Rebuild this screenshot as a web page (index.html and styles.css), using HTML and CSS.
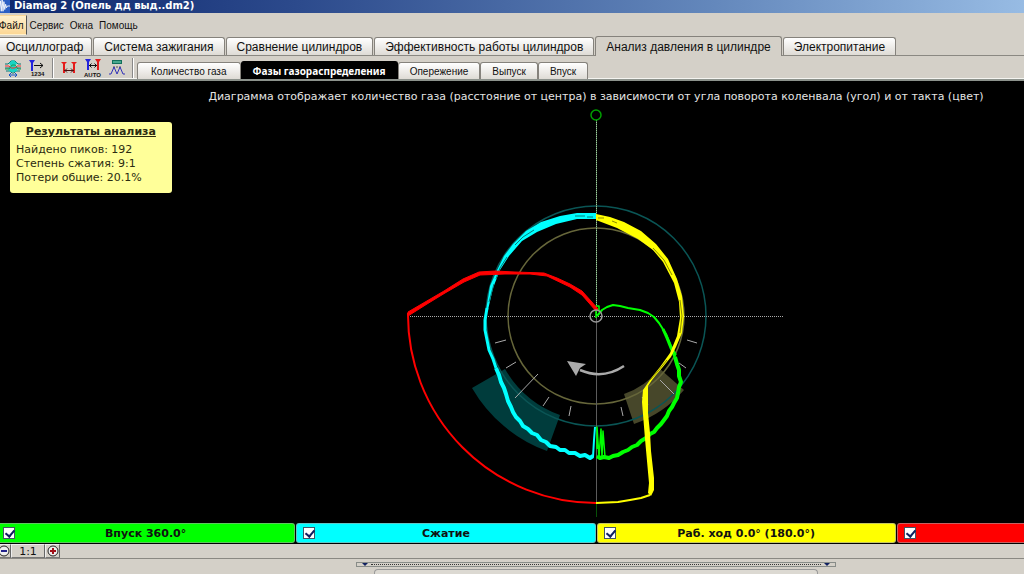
FILE: index.html
```html
<!DOCTYPE html>
<html lang="ru">
<head>
<meta charset="utf-8">
<title>Diamag 2</title>
<link rel="stylesheet" href="styles.css">
</head>
<body>
<div class="app">
  <header class="titlebar">
    <svg class="logo" viewBox="0 0 16 16" aria-hidden="true"><rect width="16" height="16" fill="#2b5fc4"/><path d="M0 8h2l1-3 1 7 1-10 1 12 1-14 1 14 1-11 1 9 1-6 1 4 1-2h3" fill="none" stroke="#fff"/></svg>
    <span>Diamag 2 (Опель дд выд..dm2)</span>
  </header>
  <nav class="menu">
    <button class="menu-item menu-open">Файл</button>
    <button class="menu-item">Сервис</button>
    <button class="menu-item">Окна</button>
    <button class="menu-item">Помощь</button>
  </nav>
  <div class="tabs" role="tablist">
    <button class="tab tab-first" role="tab">Осциллограф</button>
    <button class="tab" role="tab">Система зажигания</button>
    <button class="tab" role="tab">Сравнение цилиндров</button>
    <button class="tab" role="tab">Эффективность работы цилиндров</button>
    <button class="tab tab-active" role="tab" aria-selected="true">Анализ давления в цилиндре</button>
    <button class="tab" role="tab">Электропитание</button>
  </div>
  <div class="toolbar">
    <div class="tools">
      <button class="tool" aria-label="Масштаб сигнала"><svg viewBox="0 0 18 18"><path d="M1 5h3l3-3h4l3 3h3M1 9h16M2 12h4l2 2h2l2-2h4" fill="none" stroke="#087878"/><path d="M5 4l4-3 4 3-2 4 3 3-3 2H7l-3-2 3-3z" fill="#18d4c4"/><path d="M1 7h4l2 2h4l2-2h4" fill="none" stroke="#e33"/><path d="M1 10h4l3-4h3l3 4h3" fill="none" stroke="#1c9b54"/><path d="M5 16h8M7 14l-2 2 2 2M11 14l2 2-2 2" fill="none" stroke="#1556c8"/></svg></button>
      <button class="tool" aria-label="Нумерация"><svg viewBox="0 0 18 18"><path d="M1 1h6L5 4v8H3V4z" fill="#2222dd"/><path d="M6 6.500h9M12 4l3 2.500-3 2.500" fill="none" stroke="#111"/><text class="tool-text" x="3" y="17">1234</text></svg></button>
      <span class="divider"></span>
      <button class="tool" aria-label="Маркеры"><svg viewBox="0 0 18 18"><path d="M1 3h6L5 5v9H3V5zM11 3h6l-2 2v9h-2V5z" fill="#e51b1b"/><path d="M4 11.500h10M7 9.500l-2 2 2 2M11 9.500l2 2-2 2" fill="none" stroke="#4a1010"/></svg></button>
      <button class="tool" aria-label="Автоматические маркеры"><svg viewBox="0 0 18 18"><path d="M1 0h6L5 3v8H3V3z" fill="#2222dd"/><path d="M11 0h6l-2 3v8h-2V3z" fill="#e51b1b"/><path d="M5 6.500h8M7.500 4.500l-2 2 2 2M10.500 4.500l2 2-2 2" fill="none" stroke="#111"/><text class="tool-text" x="0" y="18">AUTO</text></svg></button>
      <button class="tool" aria-label="Пики"><svg viewBox="0 0 18 18"><path d="M4 1h10v4H4z" fill="#13705c"/><path d="M5 3h8" stroke="#7fe0c0"/><path d="M6 7v2M9 7v2M12 7v2" stroke="#555"/><path d="M1 15h2l3-7 3 7 3-7 3 7h2" fill="none" stroke="#3030b8"/></svg></button>
      <span class="divider"></span>
    </div>
    <div class="subtabs" role="tablist">
      <button class="subtab subtab-first" role="tab">Количество газа</button>
      <button class="subtab subtab-active" role="tab" aria-selected="true">Фазы газораспределения</button>
      <button class="subtab" role="tab">Опережение</button>
      <button class="subtab" role="tab">Выпуск</button>
      <button class="subtab" role="tab">Впуск</button>
    </div>
  </div>
  <main class="canvas">
    <p class="caption">Диаграмма отображает количество газа (расстояние от центра) в зависимости от угла поворота коленвала (угол) и от такта (цвет)</p>
    <section class="results">
      <h2 class="results-title">Результаты анализа</h2>
      <p class="results-row">Найдено пиков: 192</p>
      <p class="results-row">Степень сжатия: 9:1</p>
      <p class="results-row">Потери общие: 20.1%</p>
    </section>
    <svg class="diagram" viewBox="406 108 380 410" role="img" aria-label="Фазы газораспределения">
      <g fill="none" stroke-linejoin="round">
        <path d="M472 388L505 369A105 105 0 0 0 560 415L547 451A143 143 0 0 1 472 388Z" fill="#003c3c"/>
        <path d="M624 394A83 83 0 0 0 660 369L684 390A115 115 0 0 1 634 424Z" fill="#47472a"/>
        <circle cx="596" cy="316" r="110" stroke="#0a5555" stroke-width="1.5"/>
        <circle cx="596" cy="316" r="88" stroke="#66663a" stroke-width="1.5"/>
        <path d="M408 316.500H784" stroke="#aaa" stroke-dasharray="1 1"/>
        <path d="M596.500 120V316" stroke="#4a704a"/>
        <path d="M596.500 120V316" stroke="#a0c8a0" stroke-dasharray="1 1"/>
        <path d="M596.500 316V502" stroke="#5c5c5c"/>
        <path d="M596.500 502V517" stroke="#085008"/>
        <path d="M495 343L506 340M506 368L516 362M515 398L538 374M543 406L549 397M569 416L571 406M621 407L623 416M642 397L648 405M660 380L674 394M679 363L686 368M687 340L697 343" stroke="#aaa"/>
        <path d="M597 316L602 310 607 307 613 305 620 306 628 308 640 310 648 313 654 317 659 323 666 334 671 346 676 355" stroke="#0f0" stroke-width="2"/>
        <path d="M663 329L667 338 671 348 675 357" stroke="#0f0" stroke-width="3"/>
        <path d="M675 357L677 364 679 370 679 376 681 382 679 387 678 393 677 398 674 403 672 407 669 411 667 416 664 420 661 424 657 428 654 432 650 434 646 438 641 441 637 445 632 447 628 450 623 452 618 455 613 456 609 458 604 457 600 458 597 456" stroke="#0f0" stroke-width="4"/>
        <path d="M597 449L597 427 599 457 601 429 602 457 603 431 605 457M596 318V306H599V311" stroke="#0f0" stroke-width="1.5"/>
        <path d="M596 213L577 213 560 216 541 222 526 231 513 244 504 256 497 270 490 286 486 310 488 310 493 288 500 270 509 256 522 241 537 232 556 224 577 219 596 219Z" fill="#0ff"/>
        <path d="M494 284L489 302M496 279L500 268 507 257M575 216H585M587 217H593M515 245L523 237 534 230" stroke="#047b7b"/>
        <path d="M487 308L485 320 485 330 487 340 489 350 493 359 496 368" stroke="#0ff" stroke-width="3"/>
        <path d="M496 368L499 375 501 382 504 388 506 394 508 401 511 407 513 412 516 417 520 421 523 426 528 429 532 433 537 435 541 440 546 442 550 446 556 447 560 450 565 450 569 453 575 453 580 456 585 455 590 458 593 456" stroke="#0ff" stroke-width="4"/>
        <path d="M593 457L594 440 595 427" stroke="#0ff" stroke-width="2"/>
        <path d="M596 214L610 217 624 222 641 231 656 244 668 259 677 279 682 296 684 316 682 333 676 347 671 357 662 368 656 375 652 380 648 386 648 397 648 413 650 433 651 451 654 478 654 490 651 496 648 493 649 483 645 439 642 402 643 390 652 377 660 367 670 353 677 336 680 318 679 302 674 283 663 262 653 250 638 239 617 228 596 220Z" fill="#ff0"/>
        <path d="M598 218H604M612 221L617 223M653 248L664 260 672 275M650 380L658 371 667 360M680 300L682 316 680 333" stroke="#898900"/>
        <path d="M650 495L641 498 630 500 618 502 596 503" stroke="#ff0" stroke-width="2"/>
        <path d="M408 312L420 305 444 291 463 279 479 272 495 271 515 272 544 273 557 278 570 284 582 291 591 301 598 309 596 311 582 295 570 287 547 276 530 274 505 274 480 275 464 282 445 293 427 304 408 316Z" fill="#f00" stroke="#f00"/>
        <path d="M408 313A188 188 0 0 0 596 503" stroke="#f00" stroke-width="2"/>
        <circle cx="596" cy="316" r="6" stroke="#999" stroke-width="1.500"/>
        <path d="M624 366Q603 380 580 370" stroke="#aaa" stroke-width="2.500"/>
        <path d="M567 361L586 364 580 368 576 376Z" fill="#aaa"/>
        <circle cx="596" cy="115" r="5" stroke="#00a000" stroke-width="1.500"/>
      </g>
    </svg>
  </main>
  <div class="legend">
    <label class="stroke intake"><input class="check" type="checkbox" checked><span class="stroke-name">Впуск 360.0°</span></label>
    <label class="stroke compression"><input class="check" type="checkbox" checked><span class="stroke-name">Сжатие</span></label>
    <label class="stroke power"><input class="check" type="checkbox" checked><span class="stroke-name">Раб. ход 0.0° (180.0°)</span></label>
    <label class="stroke exhaust"><input class="check" type="checkbox" checked><span class="stroke-name">Выпуск</span></label>
  </div>
  <div class="zoombar">
    <button class="zoom" aria-label="Уменьшить"><svg viewBox="0 0 12 12"><circle cx="6" cy="6" r="5" fill="#eee" stroke="#222"/><path d="M3 6h6" stroke="#22228c" stroke-width="2"/></svg></button>
    <button class="zoom zoom-reset">1:1</button>
    <button class="zoom" aria-label="Увеличить"><svg viewBox="0 0 12 12"><circle cx="6" cy="6" r="5" fill="#eee" stroke="#222"/><path d="M3 6h6M6 3v6" stroke="#a01018" stroke-width="2"/></svg></button>
  </div>
  <footer class="bottom">
    <div class="splitter"><span class="arrow"></span><span class="dots"></span><span class="arrow"></span></div>
    <div class="panel"></div>
  </footer>
</div>
</body>
</html>
```
FILE: styles.css
```css
* { box-sizing: border-box; }
html, body { height: 100%; }
body {
  margin: 0;
  overflow: hidden;
  background: #d4d0c8;
  color: #111;
  font-family: "DejaVu Sans", sans-serif;
  font-size: 11px;
}
button { font: inherit; color: inherit; margin: 0; }
p, h2 { margin: 0; }
.app {
  display: flex;
  flex-direction: column;
  min-width: 1200px;
  height: 100%;
  margin-left: -4px;
}
.titlebar {
  display: flex;
  align-items: flex-end;
  gap: 4px;
  height: 13px;
  overflow: hidden;
  background: linear-gradient(90deg, #0c266c, #2c4a8c 25%, #6488bc 60%, #98bce4 86%, #a6caf0);
  color: #fff;
  font: bold 10px/15px "DejaVu Sans", sans-serif;
}
.logo { width: 14px; height: 14px; }
.menu {
  display: flex;
  height: 23px;
  padding: 2px 0 1px 2px;
  font-family: "Liberation Sans", sans-serif;
  font-size: 10px;
}
.menu-item { padding: 1px 2px 0; border: 1px solid transparent; background: none; }
.menu-open { border-right-color: #555; background: linear-gradient(#fff0cc, #fcd795); padding-left: 0; }
.tabs {
  display: flex;
  align-items: flex-end;
  gap: 1px;
  height: 20px;
  padding-left: 1px;
  border-bottom: 1px solid #8a8882;
  font: 12px/16px "Liberation Sans", sans-serif;
}
.tab {
  height: 18px;
  padding: 0 10px;
  border: 1px solid #85827c;
  border-bottom: 0;
  border-radius: 3px 3px 0 0;
  background: linear-gradient(#fff, #dedbd5);
  white-space: nowrap;
}
.tab-first { padding: 0 8px; }
.tab-active { height: 20px; margin-bottom: -1px; background: #d4d0c8; }
.toolbar {
  display: flex;
  height: 25px;
  padding-left: 8px;
  border-bottom: 2px solid #8c928c;
  box-shadow: inset 0 -1px #f4f4f0;
}
.tools { display: flex; align-items: center; gap: 6px; }
.tool { width: 18px; height: 18px; padding: 0; border: 0; background: none; }
.tool svg { display: block; width: 18px; height: 18px; overflow: visible; }
.tool-text { font: bold 6px "Liberation Sans", sans-serif; fill: #111; }
.divider { width: 2px; height: 20px; border-left: 1px solid #888; background: #fff; }
.subtabs {
  display: flex;
  align-items: flex-end;
  margin-left: 3px;
  font: 10px/14px "Liberation Sans", sans-serif;
}
.subtab {
  height: 17px;
  padding: 1px 11px 0;
  border: 1px solid #85827c;
  border-bottom: 0;
  border-radius: 3px 3px 0 0;
  background: linear-gradient(#fff, #dedbd5);
  white-space: nowrap;
}
.subtab-first { padding: 1px 13px 0; }
.subtab-active { height: 18px; padding: 0 11px; border-color: #000; background: #000; color: #fff; font: bold 10px/14px "Noto Sans", sans-serif; }
.canvas {
  position: relative;
  flex: 1;
  min-height: 0;
  display: flex;
  flex-direction: column;
  align-items: center;
  padding-top: 8px;
  background: #000;
}
.caption { color: #e4e4e4; line-height: 16px; white-space: nowrap; }
.diagram { flex: 1; min-height: 0; margin: 3px 0 5px; }
.results {
  position: absolute;
  top: 41px;
  left: 14px;
  padding: 3px 30px 8px 6px;
  border-radius: 3px;
  background: #ffff99;
  color: #2b2b10;
}
.results-title { margin: 0 -24px 4px 0; text-align: center; text-decoration: underline; font: bold 11px/14px "DejaVu Sans", sans-serif; }
.results-row { line-height: 14px; white-space: nowrap; }
.legend { display: grid; grid-template-columns: repeat(4, 1fr); gap: 1px; padding-bottom: 1px; background: #000; }
.stroke {
  display: grid;
  grid-template-columns: 12px 1fr 12px;
  align-items: center;
  height: 20px;
  padding: 0 6px;
  border: 1px solid rgb(160 160 160 / 60%);
  border-radius: 3px;
}
.stroke-name { text-align: center; font-weight: bold; }
.intake { background: #0f0; }
.compression { background: #0ff; }
.power { background: #ff0; }
.exhaust { background: #f00; }
.check {
  appearance: none;
  width: 12px;
  height: 12px;
  margin: 0;
  border: 1px solid #456;
  background: #fff;
}
.check:checked::after {
  content: "";
  display: block;
  width: 4px;
  height: 7px;
  margin: 0 0 0 3px;
  border: solid #102060;
  border-width: 0 2px 2px 0;
  transform: rotate(40deg);
}
.zoombar { display: flex; height: 15px; border-bottom: 1px solid #8a8882; }
.zoom { display: grid; place-items: center; width: 15px; padding: 0; border: 1px solid; border-color: #eee #666 #777 #eee; background: #d4d0c8; }
.zoom svg { display: block; width: 12px; height: 12px; }
.zoom-reset { width: 34px; }
.bottom { display: flex; flex-direction: column; align-items: center; gap: 2px; height: 15px; padding-top: 3px; overflow: hidden; }
.splitter { display: flex; align-items: center; gap: 3px; width: 40%; height: 7px; padding: 0 5px; border: 1px solid #888c88; }
.arrow { border: 3px solid transparent; border-top-color: #102060; border-bottom: 0; }
.dots { flex: 1; border-top: 1px dotted #333; }
.panel { width: 37%; height: 8px; border: 1px solid #999; border-bottom: 0; border-radius: 4px 4px 0 0; background: #dcd9d2; }
```
